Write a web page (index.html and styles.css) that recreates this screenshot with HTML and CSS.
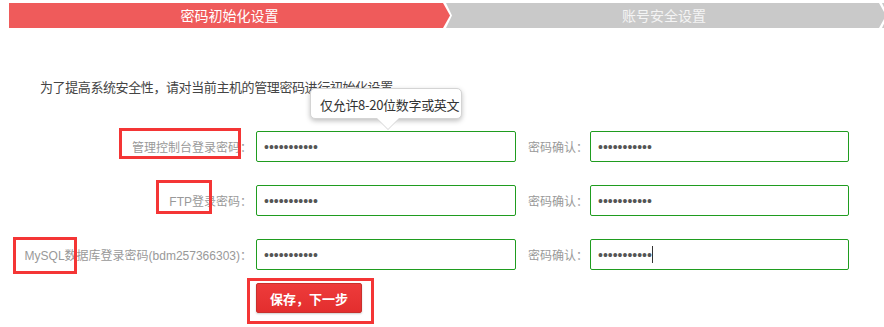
FILE: index.html
```html
<!DOCTYPE html>
<html lang="zh-CN">
<head>
<meta charset="utf-8">
<title>密码初始化设置</title>
<link rel="stylesheet" href="styles.css">
</head>
<body>
<div class="page">
  <div class="steps">
    <div class="step step-active">密码初始化设置</div>
    <div class="step step-next">账号安全设置</div>
    <div class="step step-more"></div>
  </div>

  <p class="intro">为了提高系统安全性，请对当前主机的管理密码进行初始化设置</p>

  <form class="form">
    <div class="row">
      <label class="label">管理控制台登录密码：</label>
      <div class="field">
        <input class="input" type="password" value="abcdefghijk">
        <div class="tip">仅允许8-20位数字或英文</div>
      </div>
      <label class="label-confirm">密码确认：</label>
      <input class="input input-confirm" type="password" value="abcdefghijk">
    </div>
    <div class="row">
      <label class="label">FTP登录密码：</label>
      <div class="field">
        <input class="input" type="password" value="abcdefghijk">
      </div>
      <label class="label-confirm">密码确认：</label>
      <input class="input input-confirm" type="password" value="abcdefghijk">
    </div>
    <div class="row">
      <label class="label">MySQL数据库登录密码(bdm257366303)：</label>
      <div class="field">
        <input class="input" type="password" value="abcdefghijk">
      </div>
      <label class="label-confirm">密码确认：</label>
      <div class="field">
        <input class="input input-confirm" type="password" value="abcdefghijk">
        <span class="caret"></span>
      </div>
    </div>
    <div class="actions">
      <button class="btn" type="button">保存，下一步</button>
    </div>
  </form>

  <div class="mark mark-1"></div>
  <div class="mark mark-2"></div>
  <div class="mark mark-3"></div>
  <div class="mark mark-4"></div>
</div>
</body>
</html>
```

FILE: styles.css
```css
* { box-sizing: border-box; }

html, body {
  margin: 0;
  padding: 0;
  background: #fff;
  overflow: hidden;
}

body {
  font-family: "Liberation Sans", "Noto Sans CJK SC", sans-serif;
  color: #333;
}

.page {
  position: relative;
  width: 884px;
  height: 327px;
}

/* ---------- steps bar ---------- */
.steps {
  display: flex;
  padding: 3px 0 0 9px;
  height: 28px;
}

.step {
  height: 25px;
  line-height: 25px;
  text-align: center;
  font-size: 14px;
  font-family: "Noto Sans CJK SC", sans-serif;
  flex: none;
}

.step-active {
  width: 441px;
  background: #ef5b5b;
  color: #fff;
  clip-path: polygon(0 0, calc(100% - 7px) 0, 100% 50%, calc(100% - 7px) 100%, 0 100%);
}

.step-next {
  width: 440px;
  margin-left: -4px;
  background: #c9c9c9;
  color: #f4f4f4;
  padding-right: 4px;
  clip-path: polygon(0 0, calc(100% - 7px) 0, 100% 50%, calc(100% - 7px) 100%, 0 100%, 6px 50%);
}

.step-more {
  width: 40px;
  margin-left: -4px;
  background: #c9c9c9;
  clip-path: polygon(0 0, 100% 0, 100% 100%, 0 100%, 6px 50%);
}

/* ---------- intro ---------- */
.intro {
  margin: 49px 0 0 40px;
  font-size: 13px;
  line-height: 20px;
  font-family: "Noto Sans CJK SC", sans-serif;
  color: #444;
  letter-spacing: -0.4px;
}

/* ---------- form ---------- */
.form {
  margin-top: 34px;
  display: flex;
  flex-direction: column;
  gap: 23px;
}

.row {
  display: flex;
  align-items: center;
  height: 31px;
}

.label {
  width: 252px;
  margin-right: 4px;
  text-align: right;
  font-size: 12px;
  font-family: "Liberation Sans", "Noto Sans CJK SC", sans-serif;
  color: #999;
  white-space: nowrap;
}

.label-confirm {
  margin-left: 12px;
  width: 62px;
  font-size: 12px;
  font-family: "Noto Sans CJK SC", sans-serif;
  color: #999;
  white-space: nowrap;
}

.field {
  position: relative;
  display: flex;
}

.input {
  width: 260px;
  height: 31px;
  border: 1px solid #1f9c1f;
  border-radius: 2px;
  padding: 0 7px;
  font-family: "Liberation Sans", sans-serif;
  font-size: 14px;
  color: #555;
  background: #fff;
  outline: none;
}

.input-confirm {
  width: 259px;
}

.caret {
  position: absolute;
  left: 62px;
  top: 7px;
  width: 1px;
  height: 17px;
  background: #333;
}

/* ---------- tooltip ---------- */
.tip {
  position: absolute;
  left: 54px;
  top: -43px;
  width: 152px;
  height: 31px;
  line-height: 31px;
  padding-left: 9px;
  font-size: 13px;
  font-family: "Noto Sans CJK SC", sans-serif;
  color: #333;
  white-space: nowrap;
  letter-spacing: -0.3px;
  background: #fff;
  border: 1px solid #d4d4d4;
  border-radius: 5px;
  box-shadow: 0 2px 5px rgba(0, 0, 0, 0.25);
}

.tip::after {
  content: "";
  position: absolute;
  left: 66px;
  bottom: -11px;
  width: 0;
  height: 0;
  border-left: 11px solid transparent;
  border-right: 11px solid transparent;
  border-top: 11px solid #fff;
  filter: drop-shadow(0 1px 0 #d4d4d4);
}

/* ---------- button ---------- */
.actions {
  margin-top: -10px;
  padding-left: 256px;
}

.btn {
  width: 106px;
  height: 30px;
  border: 1px solid #c9302c;
  border-radius: 2px;
  background: linear-gradient(#ee3b3b, #e32e2e);
  color: #fff;
  font-size: 13px;
  font-weight: bold;
  font-family: "Noto Sans CJK SC", sans-serif;
  box-shadow: 0 1px 2px rgba(0, 0, 0, 0.2);
  padding: 0;
}

/* ---------- annotation boxes ---------- */
.mark {
  position: absolute;
  border: 3px solid #f43535;
}

.mark-1 { left: 119px; top: 128px; width: 122px; height: 31px; }
.mark-2 { left: 156px; top: 180px; width: 56px; height: 34px; }
.mark-3 { left: 13px;  top: 237px; width: 64px; height: 37px; }
.mark-4 { left: 247px; top: 278px; width: 127px; height: 46px; }
```
